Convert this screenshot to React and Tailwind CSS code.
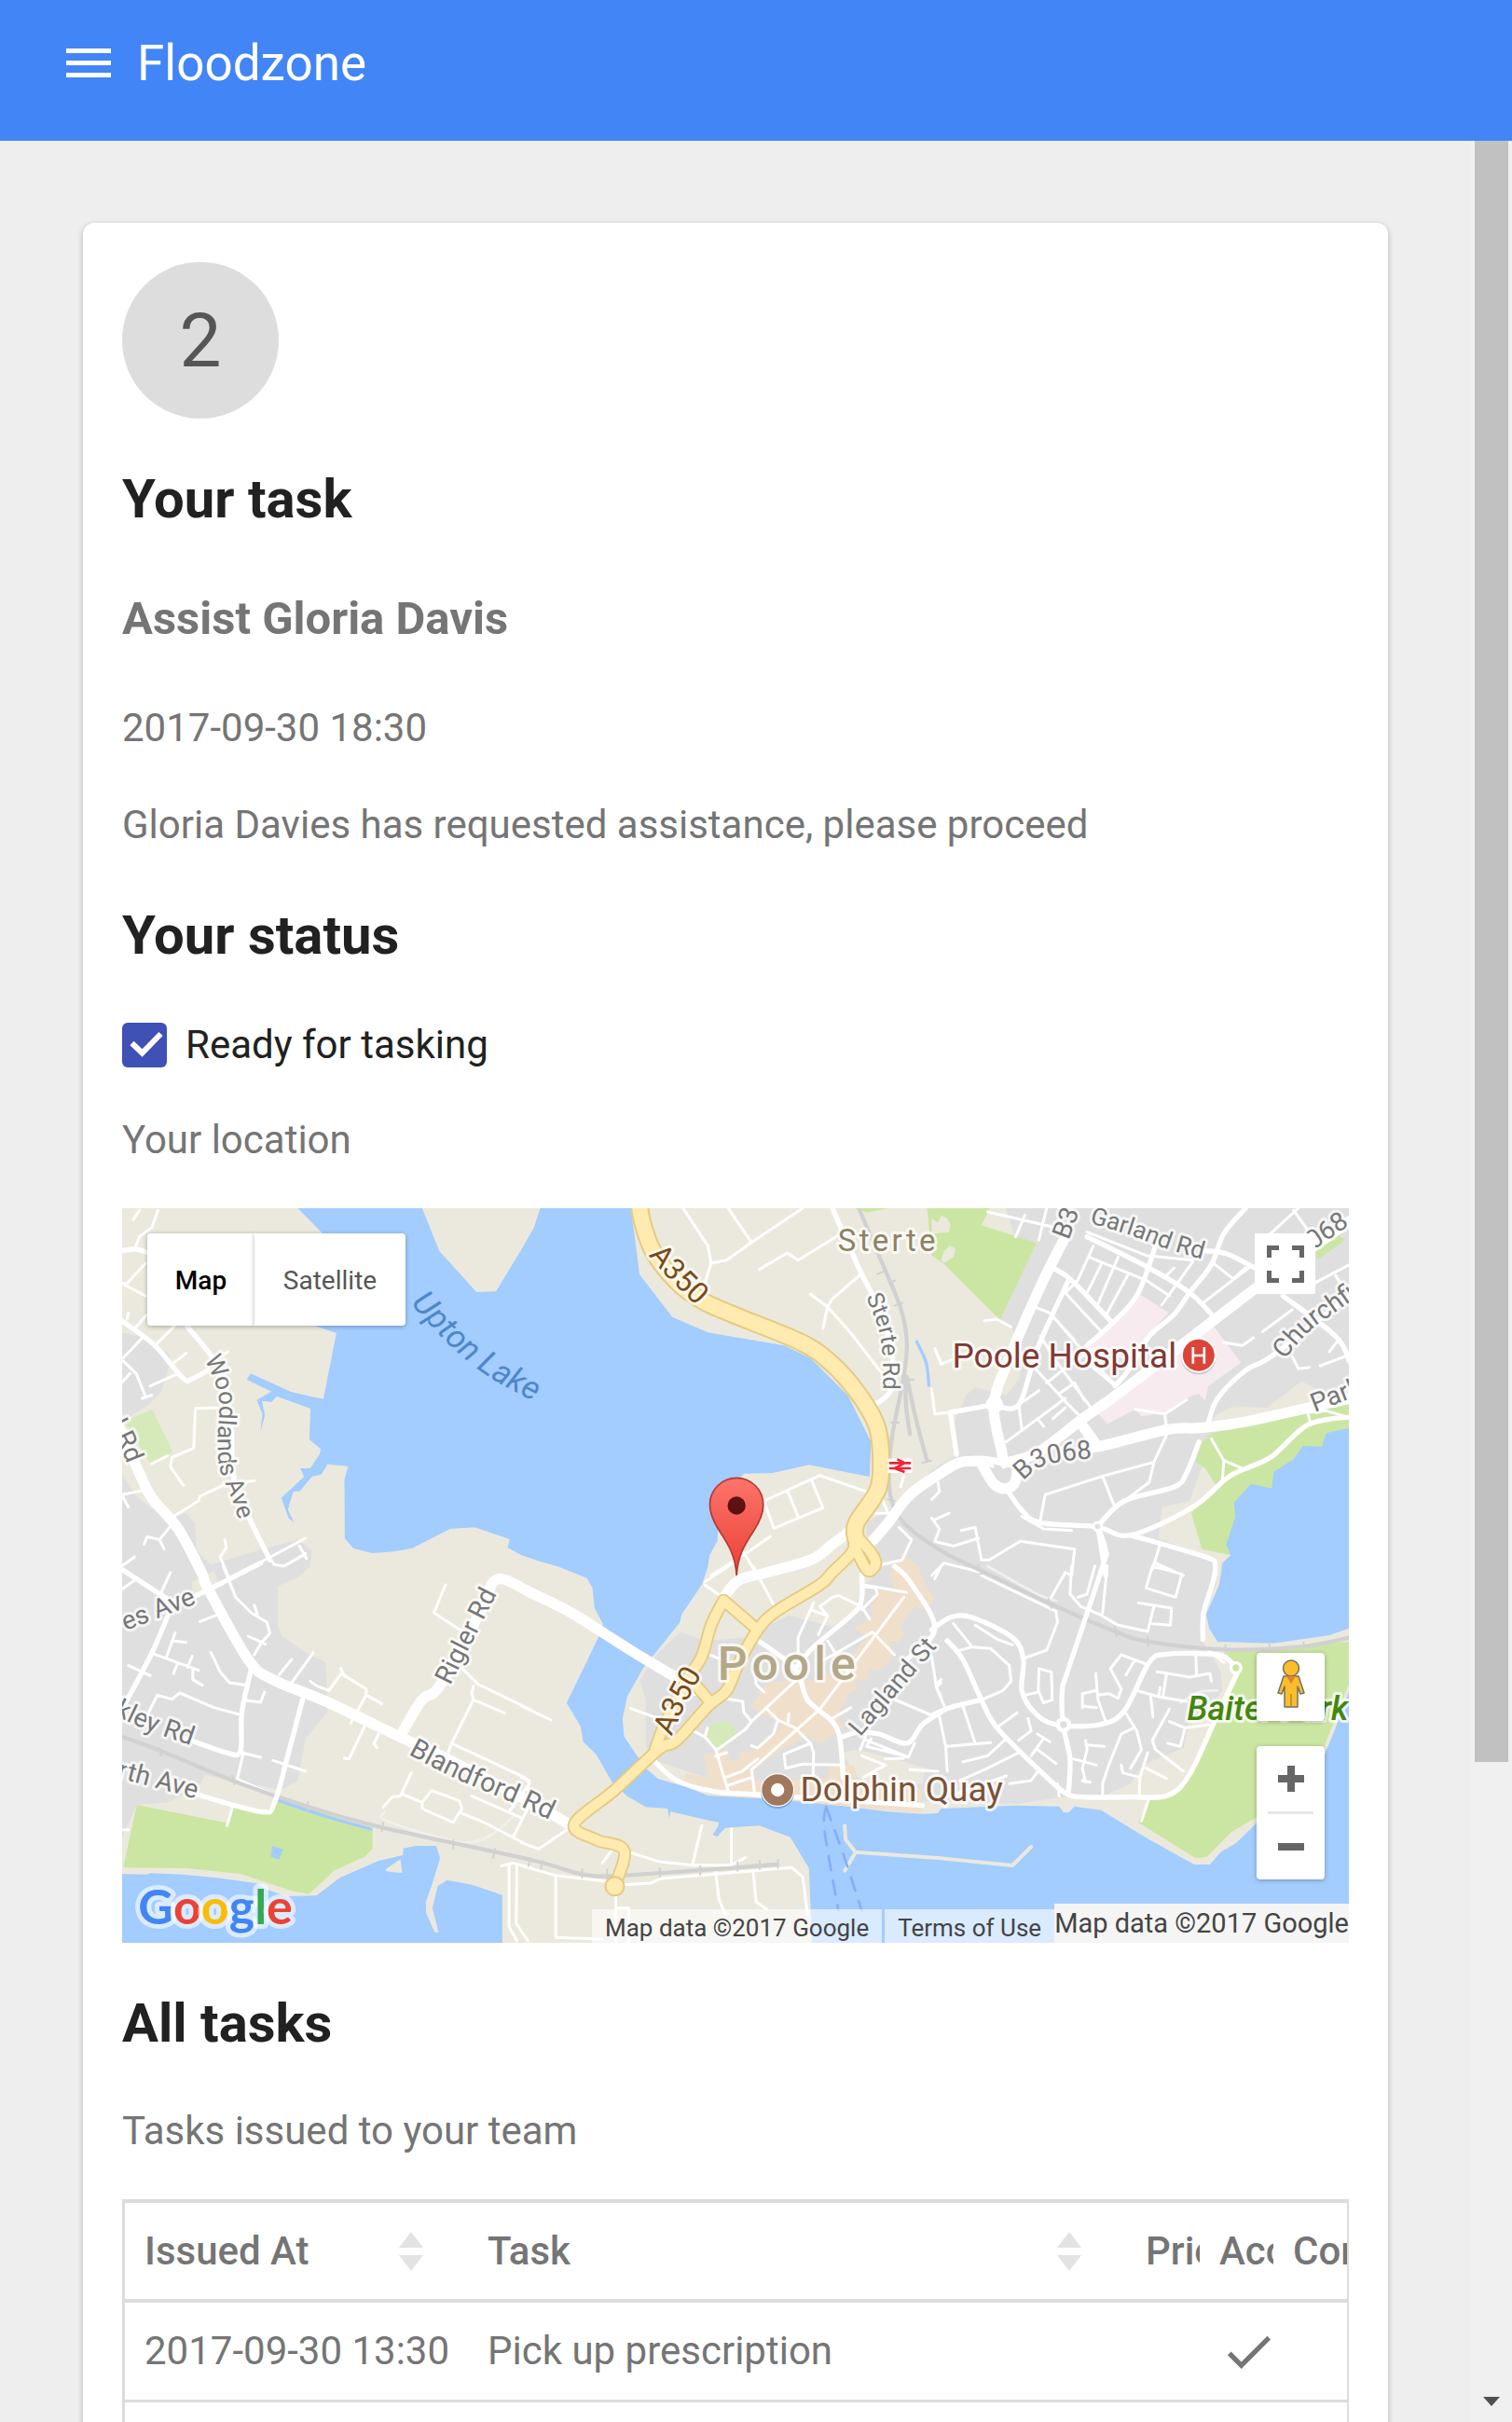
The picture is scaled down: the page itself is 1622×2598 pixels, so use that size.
import React from "react";

/* ------------------------------------------------------------------ */
/* Map geometry. Shapes are stored per survey sheet; each sheet has an */
/* origin on the map canvas (3951 x 2364 units, 3 units to a pixel).   */
/* ------------------------------------------------------------------ */
const SHEETS = {
  nw: [-33, -48],
  n: [1287, -48],
  ne: [2607, -48],
  sw: [-33, 1152],
  s: [1287, 1152],
  se: [2607, 1152],
};

function points(line) {
  let origin = [0, 0];
  const out = [];
  line.trim().split(/\s+/).forEach((token) => {
    if (SHEETS[token]) origin = SHEETS[token];
    else {
      const [x, y] = token.split(",").map(Number);
      out.push([x + origin[0], y + origin[1]]);
    }
  });
  return out;
}

const area = (shapes) =>
  shapes.map((s) => "M" + points(s).map((p) => p.join(" ")).join("L") + "Z").join("");

const lines = (shapes) =>
  shapes.map((s) => "M" + points(s).map((p) => p.join(" ")).join("L")).join("");

const curves = (shapes) =>
  shapes
    .map((s) => {
      const p = points(s);
      let d = "M" + p[0].join(" ");
      for (let i = 0; i < p.length - 1; i++) {
        const a = p[i - 1] || p[i];
        const b = p[i];
        const c = p[i + 1];
        const e = p[i + 2] || c;
        d += `C${b[0] + (c[0] - a[0]) / 6} ${b[1] + (c[1] - a[1]) / 6} ${c[0] - (e[0] - b[0]) / 6} ${c[1] - (e[1] - b[1]) / 6} ${c[0]} ${c[1]}`;
      }
      return d;
    })
    .join("");

const URBAN = [
  "nw 33,448 100,462 190,520 182,570 160,640 120,680 33,735",
  "nw 33,900 80,975 130,1015 200,1040 240,1028 268,1060 275,1150 320,1195 470,1150 600,1115 645,1150 640,1190 sw 640,0 600,35 535,65 535,190 550,225 620,275 690,310 695,470 625,555 600,690 545,720 390,690 300,672 280,715 180,760 82,768 33,875",
  "ne 238,48 268,140 338,160 220,408 255,430 290,520 280,600 240,650 140,625 110,650 70,740 85,840 0,890 n 1250,980 1110,1060 1110,1090 s 1150,20 1100,60 1060,170 1000,195 860,158 720,230 590,240 510,212 430,290 380,370 400,430 400,580 430,625 620,690 700,720 1350,760 se 270,765 410,745 550,740 640,700 680,640 810,585 830,500 880,480 935,400 930,340 900,285 870,240 870,150 915,60 915,0 ne 912,1180 730,1110 740,1010 830,990 870,880 848,865 870,800 1344,680 1344,48",
];

const SAND = [
  "ne 880,750 920,710 970,685 1080,690 1190,605 1260,640 1210,700",
  "s 1030,600 1080,590 1200,620 1300,650 1290,700 1090,690",
  "sw 260,50 330,15 345,50 300,95 260,85",
];

const COMMERCIAL = [
  "s 1185,25 1195,0 1240,-30 1275,0 1300,60 1330,105 1300,140 1265,130 1220,190 1232,220 1210,245 1180,240 1195,265 1185,310 1150,335 1120,330 1110,365 1070,370 1080,395 1050,415 1015,480 1035,515 1000,545 965,570 920,545 840,590 740,655 750,690 860,690 990,680 990,640 1070,640 1080,690 1200,700 1290,720 1290,795 1060,775 600,735 520,690 530,665 605,685 585,610 660,590 670,625 705,620 700,600 760,590 840,510 790,480 735,455 790,375 880,365 960,370 1060,290 1110,230 1070,195 1130,165 1125,130 1160,75 1200,75",
];

const HOSPITAL = [
  "ne 670,325 762,385 700,450 640,540 500,500",
  "ne 905,425 995,545 890,620 880,668 860,645 830,655 750,705 675,718 655,695 565,742 535,708 700,590 800,500",
];

const PARKS = [
  "ne -15,48 187,48 160,103 338,160 220,408 40,228 0,200",
  "n 1075,48 1110,62 1180,48",
  "sw 82,768 370,826 390,772 490,790 525,770 540,745 840,848 840,910 815,935 715,980 680,1015 635,1055 580,1045 415,990 240,972 38,970",
  "ne 1344,680 1210,705 1000,740 900,775 870,800 848,865 880,885 915,940 835,1030 870,1145 962,1165 1000,1000 1100,960 1344,790",
  "se 945,275 1344,243 1344,375 1265,575 1240,680 1042,810 965,855 885,935 850,940 665,825 700,745 770,738 830,680 910,500 985,340",
  "ne 1225,130 1240,215 1330,150 1290,120",
];

const GREENS = [
  "nw 42,735 132,695 197,832 130,875 95,820",
  "s 590,548 600,520 620,505 650,500 680,510 692,540 627,588",
];

const CLEARINGS = [
  "ne 0,80 20,95 30,72 50,80 60,100 55,125 0,130",
  "ne 40,185 60,168 77,180 70,205 40,225 30,215",
];

const WATER = [
  "nw 600,48 680,130 700,300 620,420 660,428 724,450 682,662 580,640 448,580 436,600 515,638 468,665 486,710 480,765 494,715 484,668 515,672 532,653 641,693 637,793 674,823 670,840 640,885 608,885 620,912 547,980 570,1045 588,1060 568,1018 585,960 607,958 645,912 675,905 696,872 762,878 750,920 751,1110 778,1142 840,1158 910,1153 968,1142 1090,1080 1168,1075 1282,1113 1275,1140 1320,1165 n 60,1185 125,1203 165,1210 s 115,0 210,38 228,70 235,135 262,185 248,228 145,440 190,515 198,565 240,605 290,692 340,740 400,775 470,780 475,810 480,790 635,825 632,838 615,865 630,870 655,842 765,835 865,872 925,972 935,1215 se 1344,1215 1344,400 1300,520 1265,605 1240,680 1042,830 980,890 930,920 895,960 845,960 700,880 610,825 545,785 460,773 440,793 425,793 410,773 270,770 30,780 20,795 s 1290,797 1180,790 1060,775 820,750 600,738 530,710 440,685 400,650 375,615 330,548 325,490 340,420 390,330 510,180 515,155 580,60 600,0 n 605,1165 630,1120 640,1000 715,902 808,900 925,874 1120,912 1125,800 1050,650 930,530 845,490 600,448 485,398 380,262 352,48 60,48 40,110 0,180 nw 1238,316 1175,318 1055,185 1000,48",
  "sw 33,990 115,992 125,988 230,992 340,1003 465,1020 500,1040 570,1065 575,1062 660,1060 735,1003 860,948 938,930 940,908 980,900 1045,900 1058,940 1030,1030 1012,1080 1013,1115 1040,1178 1053,1178 1033,1100 1050,1030 1080,1010 1160,1025 1258,1058 1258,1215 33,1215",
  "ne 1344,755 1270,772 1255,815 1195,812 1165,855 1100,897 1095,950 1028,935 973,995 977,1040 948,1130 962,1165 935,1190 930,1230 se 925,60 883,155 893,200 920,243 1100,248 1280,222 1344,200",
  "sw 517,900 553,912 540,944 513,935",
];

const ISLANDS = ["sw 883,975 930,943 936,988 885,982"];

const RAILWAYS = [
  "n 1085,48 1150,200 1220,370 1240,480 1230,590 1190,800 1185,960 1230,1060 1350,1150 ne 150,1210 se 380,120 590,210 700,243 940,268 1180,260 1344,230",
  "n 1240,590 1270,730 1305,860",
  "n 1235,600 1238,690 1250,775",
  "sw 33,548 160,595 390,690 620,770 860,838 1350,945 s 190,990 330,995 820,960",
];

const RAIL_TICKS = [
  "n 1145,260 1170,250", "n 1185,290 1202,280", "n 1200,362 1226,352", "n 1190,738 1214,738", "n 1230,600 1262,600",
  "n 1290,868 1318,860", "n 1178,985 1200,990", "se 150,-5 160,25", "se 375,105 385,135", "se 590,195 595,225", "se 695,228 697,258",
  "se 945,255 945,282", "se 1087,250 1087,275", "se 1197,245 1197,270", "s 28,940 22,965", "s 68,948 62,973", "s 195,975 195,1003",
  "s 275,975 275,1005", "s 445,972 445,1000", "s 575,965 575,993", "s 695,952 695,980", "s 766,948 766,975", "s 825,945 825,972",
  "sw 155,585 160,610", "sw 390,675 395,702", "sw 632,758 632,785", "sw 875,825 870,853", "sw 1100,882 1100,910", "sw 1235,910 1228,940",
];

const MAJOR = [
  "nw 20,740 90,900 130,980 215,1080 290,1220 sw 310,70 440,300 520,365 690,435 930,550 1060,610 1350,760 s 160,835",
  "sw 930,545 1000,430 1060,380 1200,120 1225,55 1265,43 1350,85 s 160,150 350,270 500,360 560,400",
  "s 655,95 700,45 790,20 n 930,1180 1000,1130 1060,1085",
  "n 1120,1130 1180,1060 1250,970 1350,900 ne 90,866 170,862 230,868 340,835 480,730 640,615 1050,300 1344,90",
  "ne 160,870 200,935 240,950 270,925 275,860",
  "ne 425,150 350,300 250,530 200,680 225,830 230,870",
  "ne 500,820 560,810 760,760 860,755 1010,735 1344,660",
  "ne 480,740 530,810",
];

const MEDIUM = [
  "ne 240,950 290,1020 350,1060 530,1073 640,1100 840,1010 960,910 1090,850 1210,745 1344,720",
  "ne 535,1073 560,1150 se 550,0 440,330 420,400 423,510 445,620 440,730",
  "ne 535,1073 560,1230",
  "ne 640,1100 880,1170 912,1195 se 905,50 875,150 873,235",
  "ne 860,800 820,900 780,945 620,990 535,1070",
  "ne 890,740 920,660 1010,570 1100,520 1344,330",
  "ne 1130,330 1300,460 1344,540",
  "se 0,205 60,165 130,165 260,230 295,300 290,400 330,470 400,510 540,510 620,465 700,310 760,283 920,285 970,315",
  "se 985,340 910,500 830,670 760,738 640,743 490,743 430,730 350,660 210,520 160,430 100,300 50,240",
  "se 0,480 60,455 160,430",
  "s 425,625 500,690 620,725 760,735 1290,770",
  "s 755,235 880,330 920,430 1000,500 1025,560 1035,680",
  "s 880,330 940,260 1070,150 1095,100 1095,30",
  "s 1030,550 1080,535 1150,540 1240,570 1290,510 1350,470",
  "s 1200,0 1250,50 1330,200 1240,300",
  "n 1000,48 1090,250 1150,370 1190,500 1190,630 1130,685",
  "sw 33,10 180,105", "sw 185,150 130,280 40,450", "sw 190,110 250,105 480,-10",
  "sw 240,555 370,600 415,595 420,470 450,330",
  "sw 260,730 480,790 525,760 570,600 615,430",
  "nw 33,410 140,490 230,595 260,597 310,570",
  "nw 245,430 350,570 385,750 400,940 510,1180",
  "nw 33,185 80,180 113,190",
  "ne 390,240 450,280 580,415",
  "ne 500,140 690,235 830,320 910,400",
  "ne 720,170 665,320 590,410 500,490",
  "ne 880,185 950,195 1040,240",
  "ne 1010,48 940,130 900,230 830,320 780,390 700,460 640,560 590,620",
  "ne 440,280 340,500 280,680 200,680",
  "ne 60,705 200,680", "ne 60,705 80,840",
];

const MINOR = [
  "n 520,48 600,170 610,225 590,290 605,330", "n 665,48 740,158 905,48", "n 740,158 660,215 610,225", "n 765,245 855,192 890,215 1020,135",
  "n 930,325 985,365 1060,450 1160,580", "n 1095,258 1000,340 985,365 970,435", "n 1330,500 1350,545", "n 1320,630 1330,710 1350,708",
  "n 780,990 960,908 1110,960", "n 780,990 812,1078 970,1012 932,920", "n 855,955 892,1045", "n 610,1230 720,1160 800,1105", "n 715,1155 750,1215",
  "n 1140,1030 1180,1030 1160,985", "n 1220,945 1230,910", "n 1215,1075 1255,1115 1225,1180 1160,1195",
  "ne 180,60 400,110", "ne 370,48 345,150", "ne 270,140 300,70", "ne 520,170 470,280 430,320 550,450", "ne 600,205 535,355", "ne 545,230 500,320", "ne 505,205 690,280 765,330",
  "ne 630,265 565,385", "ne 780,240 755,265", "ne 840,220 740,360", "ne 900,220 970,275 1010,240", "ne 1165,55 1240,160", "ne 1180,48 1090,130", "ne 500,125 690,200 840,215",
  "ne 330,365 380,385 480,500 595,620", "ne 350,460 400,540 520,700", "ne 320,550 430,670 490,730", "ne 280,680 345,635", "ne 280,680 290,760", "ne 370,610 420,570 520,500",
  "ne 410,645 460,610 490,665", "ne 430,690 390,725", "ne 340,725 360,750", "ne 240,800 430,660", "ne 870,355 1020,240", "ne 1160,375 1065,445", "ne 940,480 1000,490 1035,465",
  "ne 1160,525 1180,565 1215,560", "ne 1310,470 1280,510", "ne 1250,555 1344,520", "ne 1230,290 1344,230", "ne 1300,265 1330,310",
  "ne 350,1050 365,970 550,910 715,865 755,780", "ne 550,910 585,1000", "ne 715,865 700,930 620,990", "ne 750,710 755,750", "ne 900,790 940,860 1010,890", "ne 940,860 935,930",
  "ne 1210,705 1220,745", "ne 1210,705 1270,700 1344,722", "ne 10,500 30,550 80,530", "ne 0,630 10,710 60,705", "ne 170,410 210,405 255,430", "ne 500,545 590,620", "ne 655,695 750,710 820,665",
  "ne 0,985 25,960 20,930", "ne 10,1050 55,1030", "ne 95,1085 140,1075 160,1180 185,1180 285,1120 460,1145 450,1230", "ne 0,1045 25,1080 10,1120 70,1135 150,1110", "ne 735,1130 710,1210", "ne 720,1190 810,1230",
  "ne 290,1040 360,1080 450,1085", "ne 0,1230 40,1190 160,1220",
  "se 160,30 400,145 405,180 370,270 300,295", "se 385,100 430,20 450,30", "se 450,0 445,90 480,130 540,155 600,190 695,210 715,130", "se 525,0 500,90 470,100", "se 710,0 805,25 785,100 690,70 710,0",
  "se 665,118 772,135 768,190 710,185", "se 565,0 550,150", "se 70,185 130,260 85,272", "se 130,260 190,265 250,320 255,370 230,400 160,430", "se 140,190 210,235 260,253", "se 45,240 85,275",
  "se 345,330 385,340 388,430 360,440 343,400 345,330", "se 300,415 345,405", "se 25,485 45,580 50,660", "se 100,450 140,570", "se 45,580 190,568", "se 275,472 215,515", "se 240,555 180,610 100,630", "se 280,600 180,650 90,690",
  "se 345,655 320,690 250,700", "se 340,540 380,565", "se 360,555 320,610", "se 340,590 400,635", "se 240,675 60,740", "se 310,490 320,530 280,560", "se 0,290 15,390 45,460", "se 15,380 30,365",
  "se 410,740 405,700", "se 485,450 530,455", "se 528,345 535,430 560,500", "se 535,415 570,410 600,425 610,395 575,330 610,285 690,315", "se 655,300 625,350", "se 485,455 485,410 530,400",
  "se 660,400 730,420 735,390", "se 705,420 712,485", "se 725,340 830,357 895,345 900,370", "se 850,290 852,350", "se 755,350 745,415", "se 730,420 820,435", "se 765,460 710,560 720,590 810,660",
  "se 765,500 815,520 800,580 760,570", "se 650,520 610,540 570,640 550,700 550,740", "se 620,465 660,530 675,590 640,650", "se 695,600 670,680 668,740", "se 610,640 615,665 670,680", "se 690,650 755,683",
  "se 495,560 500,590 485,650 495,695", "se 500,575 555,580", "se 455,620 530,640", "se 485,690 510,695", "se 700,745 675,820", "se 820,520 890,510", "se 940,310 890,270",
  "s 590,50 680,-10", "s 590,60 640,95", "s 745,0 820,140", "s 595,280 640,300", "s 350,457 440,490", "s 545,525 590,550 625,590 665,725", "s 590,550 598,520", "s 650,425 712,435 715,470 740,500 720,525 630,590",
  "s 740,500 880,370", "s 625,612 660,600", "s 655,680 710,660 760,620", "s 665,705 740,680", "s 750,730 740,655 960,460 1230,100", "s 790,460 825,495 880,520 930,570 940,600 938,680", "s 825,495 810,540 760,585 740,578",
  "s 860,475 858,500", "s 850,650 845,605 930,570", "s 850,650 905,637 1030,640", "s 940,118 890,230 890,310", "s 930,140 985,160 955,220", "s 985,160 960,130 1000,100 1020,95 1095,130 1120,170", "s 1000,490 1060,455",
  "s 1095,65 1140,70 1145,90 1095,140", "s 960,310 1130,212", "s 985,240 1010,280", "s 1130,212 1200,285", "s 1180,420 1320,480", "s 750,340 755,380 780,405", "s 1110,560 1245,615 1265,570",
  "s 1125,555 1110,580 1240,612", "s 1110,540 1090,590", "s 1095,610 1170,640 1100,680", "s 1170,620 1230,618", "s 1250,655 1340,660", "s 1100,60 1240,85", "s 1330,40 1350,0", "s 1350,375 1335,390 1350,420",
  "s 0,450 95,495", "s 0,680 25,690 20,720", "s 0,890 55,910 150,845", "s 345,920 440,950 550,962 675,962 720,938", "s 550,962 580,835", "s 675,955 675,845", "s 290,915 260,955",
  "s 0,965 110,995 280,1015", "s 330,1025 415,1020 450,1005 870,970 905,1000 920,1120", "s 110,1000 110,1195 260,1200", "s 303,1055 303,1215", "s 303,1100 345,1100 345,1215", "s 625,985 635,1070 655,1120", "s 745,980 755,1080 790,1105",
  "nw 90,55 70,85", "nw 150,55 130,110 90,140 75,180", "nw 110,225 50,290 33,290", "nw 33,290 110,330", "nw 55,385 50,405", "nw 75,435 115,390", "nw 140,490 205,425", "nw 240,515 195,550", "nw 100,465 33,535",
  "nw 33,535 80,580 110,655", "nw 100,660 130,650", "nw 215,580 125,620", "nw 340,690 270,692 265,820 195,850 190,880 232,940", "nw 460,925 370,935 285,975 280,990 200,1040", "nw 33,970 110,955", "nw 33,970 55,1010",
  "nw 195,1065 155,1115 170,1145", "nw 105,1130 115,1105 155,1115", "nw 365,1115 370,1140 350,1170 375,1230", "nw 400,1230 625,1110", "nw 510,1175 525,1195 555,1200 625,1160", "nw 605,1135 628,1175", "nw 33,1200 75,1170", "nw 130,870 180,845",
  "nw 350,525 375,510", "nw 33,610 60,580",
  "sw 190,20 160,85", "sw 33,75 75,45", "sw 285,178 345,155", "sw 360,0 400,100 450,150 500,180 510,215 480,250 460,285", "sw 460,125 470,155", "sw 440,225 495,250", "sw 205,215 178,290", "sw 195,240 240,245",
  "sw 130,280 280,335", "sw 55,320 125,352", "sw 260,290 245,325", "sw 212,315 200,345", "sw 262,335 262,365 293,383", "sw 320,277 350,340 380,375 435,383", "sw 580,300 540,350", "sw 650,278 580,375", "sw 115,480 148,415 195,428 220,408 330,455 415,478",
  "sw 435,432 480,438 493,405", "sw 420,600 480,615", "sw 425,600 405,685 530,740", "sw 520,625 625,660", "sw 33,848 55,848", "sw 390,775 372,835", "sw 640,370 660,385 700,400 740,345 820,395 820,415 770,505",
  "sw 738,328 750,355", "sw 820,415 870,442", "sw 815,515 765,620 750,618", "sw 860,540 845,570 855,585", "sw 1075,60 1038,150 1130,210", "sw 1130,330 1180,380 1350,462", "sw 1165,385 1160,410 1165,430 1095,570 1080,610",
  "sw 1165,430 1265,472", "sw 1095,570 1330,680 1345,700 1280,790", "sw 965,665 930,740 905,742 875,775", "sw 940,735 1000,760", "sw 1000,780 1100,825 1128,780 1120,755 1030,722 1000,760 1000,780", "sw 1128,795 1200,825 1345,900",
  "sw 1160,740 1320,810", "sw 1345,770 1295,868", "sw 1255,965 1290,955 1350,970", "sw 1280,960 1280,1160 1305,1205", "sw 1305,965 1303,1150 1340,1205",
];

const FAINT = ["sw 880,790 885,820 1080,880 1160,888 1230,860 1300,800", "ne 380,385 460,470", "se 180,0 340,90 400,110", "se 800,440 860,405 920,400"];

const TRUNK_WIDE = [
  "n 378,20 388,90 425,190 500,285 580,345 680,390 900,480 1000,550 1080,640 1140,740 1156,830 1148,950 1078,1060 1075,1110",
];

const TRUNK = [
  "n 1075,1100 1120,1150 1140,1190 1115,1215 1085,1165 1070,1130",
  "n 1075,1120 1060,1160 1000,1220 s 960,60 820,145 760,205 700,310 660,400 600,450 500,560 440,590 300,720 170,830 240,880 330,915 300,1030",
  "s 650,110 760,205",
  "s 650,110 610,190 580,290 530,370 460,510 430,590",
  "s 550,370 605,435",
];

const PIERS = ["s 1040,835 1043,880 1075,920 1350,940 se 260,963 320,903", "s 1075,920 1040,980"];
const FERRY = ["s 980,775 975,850 1020,1110", "s 980,775 1040,940 1095,1110"];

const LABELS = [
  ["upton", "Upton Lake", 105, "nw 962,355 1100,500 1230,600 1400,690", "#4f86cc", "italic", "none"],
  ["a350n", "A350", 96, "n 408,200 470,270 570,370", "#7a4a17"],
  ["a350s", "A350", 96, "s 482,548 530,440 590,330", "#7a4a17"],
  ["sterterd", "Sterte Rd", 75, "n 1109,333 1150,440 1163,540 1163,680", "#777"],
  ["woodlands", "Woodlands Ave", 78, "nw 300,535 345,650 342,800 350,890 390,990 425,1100", "#777"],
  ["rdnw", "d Rd", 84, "nw -20,720 30,820 85,960", "#777"],
  ["garland", "Garland Rd", 78, "ne 507,95 640,135 760,180 900,220", "#777"],
  ["b3", "B3", 84, "ne 440,152 490,20", "#777"],
  ["068", "3068", 84, "ne 1190,210 1370,85", "#777"],
  ["church", "Churchfield", 84, "ne 1135,535 1220,440 1310,375 1500,240", "#777"],
  ["park", "Park Rd", 84, "ne 1232,705 1400,640", "#777"],
  ["b3068", "B3068", 84, "ne 294,925 345,883 410,865 520,852", "#777"],
  ["rigler", "Rigler Rd", 84, "sw 1090,385 1260,50", "#777"],
  ["blandford", "Blandford Rd", 87, "sw 955,605 1100,680 1300,765 1500,860", "#777"],
  ["esave", "es Ave", 84, "sw 45,208 300,110", "#777"],
  ["kley", "kley Rd", 84, "sw 8,478 110,525 300,592", "#777"],
  ["rth", "rth Ave", 84, "sw 17,680 150,715 330,765", "#777"],
  ["lagland", "Lagland St", 81, "s 1090,550 1350,245", "#777"],
];

function MapArtwork() {
  return (
    <svg
      viewBox="0 0 3951 2364"
      preserveAspectRatio="xMidYMid slice"
      className="block h-full w-full font-[Roboto,sans-serif]"
      role="img"
      aria-label="Map of Poole"
    >
      <defs>
        <linearGradient id="pin" x1="0" y1="0" x2="0" y2="1">
          <stop offset="0" stopColor="#fc746b" />
          <stop offset="1" stopColor="#ea4035" />
        </linearGradient>
        {LABELS.map(([id, , , line]) => (
          <path key={id} id={`label-${id}`} d={curves([line])} />
        ))}
      </defs>
      <rect width="3951" height="2364" fill="#ebe9dd" />
      <path d={area(URBAN)} fill="#dfdfdf" />
      <path d={area(SAND)} fill="#ebe9dd" />
      <path d={area(COMMERCIAL)} fill="#f0e0cb" />
      <path d={area(HOSPITAL)} fill="#f8ebf0" />
      <path d={area(PARKS)} fill="#cbe6a3" />
      <path d={area(GREENS)} fill="#d5eab8" />
      <path d={area(CLEARINGS)} fill="#ebe9dd" />
      <path d={area(WATER)} fill="#a3ccff" />
      <path d={area(ISLANDS)} fill="#ebe9dd" />
      <g fill="none" strokeLinecap="round" strokeLinejoin="round">
        <path d={curves(["n 1272,478 1302,545 1311,618", "sw 540,755 690,805 836,846"])} stroke="#a3ccff" strokeWidth="10" />
        <path d={lines(PIERS)} stroke="#ebe9dd" strokeWidth="12" />
        <path d={curves(FERRY)} stroke="#84aefa" strokeWidth="8" strokeDasharray="45 35" />
        <path d={curves(FAINT)} stroke="#f1f0ec" strokeWidth="8" />
        <path d={lines(MINOR)} stroke="#fff" strokeWidth="9" />
        <path d={curves(RAILWAYS)} stroke="#d1d1d1" strokeWidth="13" />
        <path d={lines(RAIL_TICKS)} stroke="#d1d1d1" strokeWidth="6" />
        <path d={curves(MEDIUM)} stroke="#fff" strokeWidth="16" />
        <path d={curves(MAJOR)} stroke="#fff" strokeWidth="34" />
        <g stroke="#e4cb82">
          <path d={curves(TRUNK_WIDE)} strokeWidth="60" />
          <path d={curves(TRUNK)} strokeWidth="42" />
        </g>
        <g stroke="#ffeaaf">
          <path d={curves(TRUNK_WIDE)} strokeWidth="48" />
          <path d={curves(TRUNK)} strokeWidth="31" />
        </g>
      </g>
      <circle cx="1587" cy="2182" r="30" fill="#ffeaaf" stroke="#e4cb82" strokeWidth="6" />
      <circle cx="2809" cy="632" r="28" fill="#fff" />
      <circle cx="3031" cy="1662" r="18" fill="#dfdfdf" stroke="#fff" strokeWidth="14" />
      <circle cx="3141" cy="1024" r="13" fill="#dfdfdf" stroke="#fff" strokeWidth="9" />
      <circle cx="3586" cy="1479" r="16" fill="#cbe6a3" stroke="#fff" strokeWidth="10" />
      <path d={area(["ne 200,872 220,876 252,915 230,932 215,920 200,895"])} fill="#dfdfdf" />

      <g className="font-normal">
        {LABELS.map(([id, text, size, , fill, style, halo]) => (
          <text
            key={id}
            fontSize={size}
            fill={fill}
            fontStyle={style || "normal"}
            stroke={halo || "rgba(255,255,255,0.7)"}
            strokeWidth="18"
            strokeLinejoin="round"
            paintOrder="stroke"
          >
            <textPath href={`#label-${id}`}>{text}</textPath>
          </text>
        ))}
        <g stroke="rgba(255,255,255,0.75)" strokeWidth="18" strokeLinejoin="round" paintOrder="stroke">
          <text x="2305" y="138" fontSize="99" fill="#8d8263" className="tracking-widest">Sterte</text>
          <text x="1918" y="1517" fontSize="150" fill="#b4a888" className="font-medium tracking-widest">Poole</text>
          <text x="2673" y="512" fontSize="111" fill="#813a33">Poole Hospital</text>
          <text x="2184" y="1909" fontSize="111" fill="#7c5237">Dolphin Quay</text>
          <text x="3429" y="1648" fontSize="108" fill="#45860d" fontStyle="italic" className="font-medium">Baiter Park</text>
        </g>
      </g>

      <circle cx="3466" cy="478" r="57" fill="#c9c3c6" />
      <circle cx="3466" cy="473" r="57" fill="#fff" />
      <circle cx="3466" cy="473" r="51" fill="#db4437" />
      <path d="M3448 447V500M3484 447V500M3448 474H3484" stroke="#fff" strokeWidth="8" fill="none" />

      <circle cx="2111" cy="1878" r="54" fill="#7da2dc" />
      <circle cx="2111" cy="1872" r="54" fill="#fff" />
      <circle cx="2111" cy="1872" r="36" fill="#fff" stroke="#a1785c" strokeWidth="29" />

      <rect x="2466" y="806" width="78" height="46" fill="#fff" />
      <path d="M2470 820H2540M2470 837H2540M2496 808L2520 820L2488 837L2520 849" fill="none" stroke="#ee2533" strokeWidth="8" />

      <path
        d="M1979 1182C1975 1120 1955 1085 1925 1040C1905 1010 1893 985 1893 954A86 86 0 0 1 2065 954C2065 985 2053 1010 2033 1040C2003 1085 1983 1120 1979 1182Z"
        fill="url(#pin)"
        stroke="#b53930"
        strokeWidth="5"
      />
      <circle cx="1979" cy="957" r="29" fill="#5b1211" />

      <text
        x="53"
        y="2304"
        fontSize="156"
        stroke="rgba(255,255,255,0.6)"
        strokeWidth="30"
        strokeLinejoin="round"
        paintOrder="stroke"
        className="font-[Lato,sans-serif] font-bold"
      >
        <tspan fill="#4285f4">G</tspan>
        <tspan fill="#ea4335">o</tspan>
        <tspan fill="#fbbc05">o</tspan>
        <tspan fill="#4285f4">g</tspan>
        <tspan fill="#34a853">l</tspan>
        <tspan fill="#ea4335">e</tspan>
      </text>
    </svg>
  );
}

function Pegman() {
  return (
    <svg viewBox="0 0 30 52" className="h-[52px] w-[30px]" aria-hidden="true">
      <g fill="#fbbd2c" stroke="#75705f" strokeWidth="1.5" strokeLinejoin="round">
        <path d="M7 18H23L29 36L25 37L22 29V51H8V29L5 37L1 36Z" />
        <circle cx="15" cy="9.5" r="8.5" />
      </g>
      <path d="M10 18H20L15 26Z" fill="#e2802a" />
      <path d="M15 37V50" stroke="#b58a2c" strokeWidth="1.5" />
    </svg>
  );
}

function LocationMap() {
  const control = "bg-white shadow-[0_1px_5px_rgba(0,0,0,0.3)]";
  return (
    <div className="relative mt-[49px] h-[788px] overflow-hidden">
      <MapArtwork />
      <div className="absolute top-[27px] left-[27px] flex h-[99px] text-[28px] leading-8">
        <button type="button" className={`w-[115px] rounded-l pt-0.5 font-medium text-black ${control}`}>
          Map
        </button>
        <button type="button" className={`w-[162px] rounded-r pt-0.5 text-[#565656] ${control}`}>
          Satellite
        </button>
      </div>
      <button
        type="button"
        aria-label="Toggle fullscreen"
        className="absolute top-[27px] right-9 flex size-[65px] items-center justify-center bg-white"
      >
        <svg viewBox="0 0 40 40" className="size-10" fill="none" stroke="#666" strokeWidth="5">
          <path d="M2.5 13V2.5H13M27 2.5H37.5V13M37.5 27V37.5H27M13 37.5H2.5V27" />
        </svg>
      </button>
      <div className="absolute right-[26px] bottom-[68px] flex w-[73px] flex-col gap-[27px]">
        <button type="button" aria-label="Street View" className={`flex h-[73px] items-start justify-center rounded pt-[7px] ${control}`}>
          <Pegman />
        </button>
        <div className={`flex h-[143px] flex-col items-center rounded ${control}`}>
          <button type="button" aria-label="Zoom in" className="flex w-full flex-1 items-center justify-center">
            <svg viewBox="0 0 28 28" className="size-7" stroke="#666" strokeWidth="8">
              <path d="M0 14H28M14 0V28" />
            </svg>
          </button>
          <div className="h-[3px] w-[49px] bg-[#e6e6e6]" />
          <button type="button" aria-label="Zoom out" className="flex w-full flex-1 items-center justify-center">
            <svg viewBox="0 0 28 28" className="size-7" stroke="#666" strokeWidth="8">
              <path d="M0 14H28" />
            </svg>
          </button>
        </div>
      </div>
      <div className="absolute right-0 bottom-0 flex items-end text-[26px] leading-8 text-[#444]">
        <span className="mr-[3px] bg-white/60 px-[14px] pt-1">Map data ©2017 Google</span>
        <a href="#terms" className="bg-white/60 px-[14px] pt-1">Terms of Use</a>
        <span className="bg-[#f5f5f5] text-[29px] leading-[42px]">Map data ©2017 Google</span>
      </div>
    </div>
  );
}

function SortIcon() {
  return (
    <svg viewBox="0 0 26 42" className="h-[42px] w-[26px] shrink-0" fill="#e3e3e3" aria-hidden="true">
      <path d="M13 0L26 17H0ZM13 42L0 25H26Z" />
    </svg>
  );
}

const COLUMNS = [
  { label: "Issued At", sortable: true },
  { label: "Task", sortable: true },
  { label: "Priority" },
  { label: "Accepted" },
  { label: "Completed" },
];

const TASKS = [{ issued: "2017-09-30 13:30", task: "Pick up prescription", accepted: true }];

function TaskTable() {
  return (
    <div className="mt-[49px] overflow-hidden border-t-4 border-r-2 border-l-[3px] border-[#dcdcdc]">
      <table className="w-full table-fixed border-separate border-spacing-0 text-left text-[42px] leading-[48px] text-[#757575]">
        <colgroup>
          <col className="w-[368px]" />
          <col />
          <col className="w-[79px]" />
          <col className="w-[79px]" />
          <col className="w-[79px]" />
        </colgroup>
        <thead>
          <tr className="h-[107px]">
            {COLUMNS.map(({ label, sortable }) => (
              <th key={label} scope="col" className="overflow-hidden border-b-4 border-[#dcdcdc] py-0 pr-0 pl-[21px] font-medium">
                {sortable ? (
                  <button type="button" className="flex w-full items-center justify-between pr-12">
                    {label}
                    <SortIcon />
                  </button>
                ) : (
                  label
                )}
              </th>
            ))}
          </tr>
        </thead>
        <tbody>
          {TASKS.map((t) => (
            <tr key={t.issued} className="h-[107px]">
              <td className="border-b-[3px] border-[#dcdcdc] py-0 pl-[21px] whitespace-nowrap">{t.issued}</td>
              <td className="border-b-[3px] border-[#dcdcdc] py-0 pl-[21px]">{t.task}</td>
              <td className="border-b-[3px] border-[#dcdcdc]" />
              <td className="border-b-[3px] border-[#dcdcdc] py-0 pl-[21px]">
                {t.accepted && (
                  <svg viewBox="0 0 24 24" className="size-[63px] max-w-none" fill="#757575" role="img" aria-label="Accepted">
                    <path d="M9 16.17L4.83 12L3.41 13.41L9 19L21 7L19.59 5.59Z" />
                  </svg>
                )}
              </td>
              <td className="border-b-[3px] border-[#dcdcdc]" />
            </tr>
          ))}
          <tr className="h-[108px]">
            <td colSpan={5} />
          </tr>
        </tbody>
      </table>
    </div>
  );
}

export default function App() {
  const heading = "text-[58px] leading-[64px] font-bold text-[#212121]";
  return (
    <div className="flex h-screen flex-col overflow-hidden bg-[#eee] font-[Roboto,sans-serif] text-[42px] leading-[48px] text-[#757575]">
      <header className="flex h-[151px] shrink-0 items-start gap-7 bg-[#4285f7] px-[71px] pt-9 text-white">
        <button type="button" aria-label="Open menu" className="flex h-16 items-center">
          <svg viewBox="0 0 48 32" className="h-8 w-12" fill="currentColor">
            <path d="M0 0H48V5H0ZM0 13H48V18H0ZM0 26H48V31H0Z" />
          </svg>
        </button>
        <h1 className="text-[53px] leading-[64px] font-normal">Floodzone</h1>
      </header>

      <div className="flex min-h-0 flex-1">
        <main className="min-w-0 flex-1 overflow-hidden px-[89px] pt-[88px]">
          <section className="h-[2600px] rounded-xl bg-white px-[42px] pt-[42px] shadow-[0_2px_6px_rgba(0,0,0,0.25)]">
            <div className="flex size-[168px] items-center justify-center rounded-full bg-[#ddd] pt-0.5 text-[80px] text-[#555]">2</div>

            <h2 className={`mt-[54px] ${heading}`}>Your task</h2>
            <h3 className="mt-[69px] text-[49px] leading-[56px] font-bold">Assist Gloria Davis</h3>
            <p className="mt-[65px]">2017-09-30 18:30</p>
            <p className="mt-14">Gloria Davies has requested assistance, please proceed</p>

            <h2 className={`mt-[62px] ${heading}`}>Your status</h2>
            <label className="mt-[62px] flex w-fit items-center gap-5 text-[#212121]">
              <span className="relative size-12">
                <input type="checkbox" defaultChecked className="peer block size-12 appearance-none rounded-md bg-[#3f51b5]" />
                <svg viewBox="0 0 48 48" className="pointer-events-none absolute inset-0 size-12" fill="none" stroke="#fff" strokeWidth="6">
                  <path d="M10.500 22L21.500 32.500L41.500 12" />
                </svg>
              </span>
              Ready for tasking
            </label>
            <p className="mt-[54px]">Your location</p>
            <LocationMap />

            <h2 className={`mt-[54px] ${heading}`}>All tasks</h2>
            <p className="mt-[60px]">Tasks issued to your team</p>
            <TaskTable />
          </section>
        </main>

        <div className="flex w-11 shrink-0 flex-col items-center justify-between bg-[#f0f0f0] pb-[17px]" aria-hidden="true">
          <div className="h-[1739px] w-9 bg-[#c1c1c1]" />
          <svg viewBox="0 0 18 10" className="h-2.5 w-[18px]" fill="#505050">
            <path d="M0 0H18L9 10Z" />
          </svg>
        </div>
      </div>
    </div>
  );
}
